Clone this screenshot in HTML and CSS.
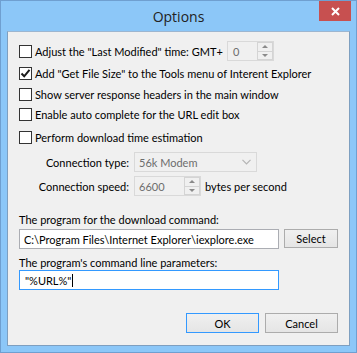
FILE: index.html
```html
<!DOCTYPE html>
<html>
<head>
<meta charset="utf-8">
<link rel="stylesheet" href="styles.css">
</head>
<body>
<div class="window">
  <div class="titlebar">
    <span class="title">Options</span>
    <div class="close">
      <svg width="9" height="9" viewBox="0 0 9 9"><path d="M1 1 L8 8 M8 1 L1 8" stroke="#fff" stroke-width="2" fill="none"/></svg>
    </div>
  </div>
  <div class="client">
    <div class="row r1">
      <span class="cb"></span>
      <span class="lbl lbl-gmt">Adjust the "Last Modified" time: GMT+</span>
      <div class="spin spin-gmt disabled">
        <span class="val">0</span>
        <span class="ud"><span class="up"><i class="tri-up"></i></span><span class="dn"><i class="tri-dn"></i></span></span>
      </div>
    </div>
    <div class="row r2">
      <span class="cb checked"><svg width="11" height="11" viewBox="0 0 11 11"><path d="M1.5 5.5 L4.2 8.3 L9.5 1.8" stroke="#1a1a1a" stroke-width="2" fill="none"/></svg></span>
      <span class="lbl">Add "Get File Size" to the Tools menu of Interent Explorer</span>
    </div>
    <div class="row r3">
      <span class="cb"></span>
      <span class="lbl">Show server response headers in the main window</span>
    </div>
    <div class="row r4">
      <span class="cb"></span>
      <span class="lbl">Enable auto complete for the URL edit box</span>
    </div>
    <div class="row r5">
      <span class="cb"></span>
      <span class="lbl">Perform download time estimation</span>
    </div>
    <div class="row r6">
      <span class="flabel">Connection type:</span>
      <div class="combo disabled"><span class="val">56k Modem</span>
        <svg class="chev" width="9" height="6" viewBox="0 0 9 6"><path d="M0.5 0.8 L4.5 4.8 L8.5 0.8" stroke="#b4b4b4" stroke-width="1.2" fill="none"/></svg>
      </div>
    </div>
    <div class="row r7">
      <span class="flabel">Connection speed:</span>
      <div class="spin spin-speed disabled">
        <span class="val">6600</span>
        <span class="ud"><span class="up"><i class="tri-up"></i></span><span class="dn"><i class="tri-dn"></i></span></span>
      </div>
      <span class="unit">bytes per second</span>
    </div>
    <div class="row r8">
      <span class="plain">The program for the download command:</span>
    </div>
    <div class="row r9">
      <div class="edit">C:\Program Files\Internet Explorer\iexplore.exe</div>
      <div class="btn btn-select">Select</div>
    </div>
    <div class="row r10">
      <span class="plain">The program's command line parameters:</span>
    </div>
    <div class="row r11">
      <div class="edit focus">"%URL%"<span class="caret"></span></div>
    </div>
    <div class="row r12">
      <div class="btn btn-ok">OK</div>
      <div class="btn btn-cancel">Cancel</div>
    </div>
  </div>
</div>
</body>
</html>
```

FILE: styles.css
```css
html, body {
  margin: 0;
  padding: 0;
  background: #ffffff;
}
body {
  font-family: "Lato", "Open Sans", sans-serif;
  font-size: 11px;
  color: #000;
}
.window {
  width: 357px;
  height: 353px;
  box-sizing: border-box;
  border: 1px solid #6f9fd0;
  background: #8cc7f8;
  display: flex;
  flex-direction: column;
}
.titlebar {
  position: relative;
  height: 30px;
  display: flex;
  align-items: center;
  justify-content: center;
}
.title {
  font-family: "Open Sans", sans-serif;
  font-size: 14px;
  color: #222;
  margin-top: 1px;
}
.close {
  position: absolute;
  top: 0;
  left: 318px;
  width: 32px;
  height: 20px;
  background: #c75050;
  display: flex;
  align-items: center;
  justify-content: center;
}
.client {
  flex: 1;
  margin: 0 6px 6px 6px;
  border: 1px solid #7e9fc0;
  border-top-color: #9db6d0;
  background: #f0f0f0;
  padding: 0 11px;
  display: flex;
  flex-direction: column;
}
.row {
  display: flex;
  align-items: center;
  height: 20px;
  flex: none;
}
.r1 { margin-top: 9px; }
.r2 { margin-top: 2px; height: 21px; }
.r4 { height: 21px; }
.r5 { margin-top: 2px; }
.r6 { margin-top: 5px; }
.r7 { margin-top: 4px; }
.r8 { margin-top: 15px; height: 16px; }
.r9 { margin-top: 2px; }
.r10 { margin-top: 5px; height: 16px; }
.r11 { margin-top: 0; }
.r12 { margin-top: 23px; justify-content: flex-end; gap: 6px; }

.cb {
  width: 13px;
  height: 13px;
  box-sizing: border-box;
  border: 1px solid #333;
  background: #fff;
  flex: none;
  display: flex;
  align-items: center;
  justify-content: center;
}
.lbl {
  margin-left: 3px;
  white-space: nowrap;
}
.lbl-gmt {
  width: 192px;
  flex: none;
}
.spin, .combo {
  box-sizing: border-box;
  height: 20px;
  border: 1px solid #d9d9d9;
  background: #f0f0f0;
  display: flex;
  align-items: center;
  position: relative;
  flex: none;
}
.spin .val, .combo .val {
  color: #6d6d6d;
  padding-left: 4px;
  flex: 1;
}
.spin-gmt { width: 47px; }
.spin-gmt .val { padding-left: 5px; }
.spin-speed { width: 67px; }
.ud {
  width: 16px;
  height: 18px;
  box-sizing: border-box;
  border: 1px solid #d4d4d4;
  display: flex;
  flex-direction: column;
  background: #f0f0f0;
}
.ud .up, .ud .dn {
  flex: 1;
  display: flex;
  align-items: center;
  justify-content: center;
}
.ud .up { border-bottom: 1px solid #d4d4d4; }
.tri-up, .tri-dn {
  width: 0;
  height: 0;
  border-left: 3px solid transparent;
  border-right: 3px solid transparent;
}
.tri-up { border-bottom: 3px solid #8a8a8a; }
.tri-dn { border-top: 3px solid #8a8a8a; }
.flabel {
  width: 110px;
  text-align: right;
  margin-right: 5px;
  white-space: nowrap;
  flex: none;
}
.combo { width: 123px; }
.combo .val { padding-left: 4px; }
.chev { margin-right: 5px; }
.unit { margin-left: 4px; }
.plain { white-space: nowrap; }
.edit {
  box-sizing: border-box;
  width: 260px;
  height: 20px;
  border: 1px solid #abadb3;
  background: #fff;
  padding-left: 4px;
  display: flex;
  align-items: center;
  white-space: nowrap;
  flex: none;
}
.edit.focus {
  border-color: #3399ff;
  padding-left: 5px;
}
.caret {
  display: inline-block;
  width: 1px;
  height: 13px;
  background: #000;
  margin-left: 1px;
}
.btn {
  box-sizing: border-box;
  height: 20px;
  border: 1px solid #acacac;
  background: linear-gradient(#f0f0f0, #e5e5e5);
  display: flex;
  align-items: center;
  justify-content: center;
  flex: none;
}
.btn-select { width: 54px; margin-left: 5px; height: 19px; align-self: flex-start; }
.btn-ok, .btn-cancel { width: 73px; }
.btn-ok { border-color: #3399ff; }
```
